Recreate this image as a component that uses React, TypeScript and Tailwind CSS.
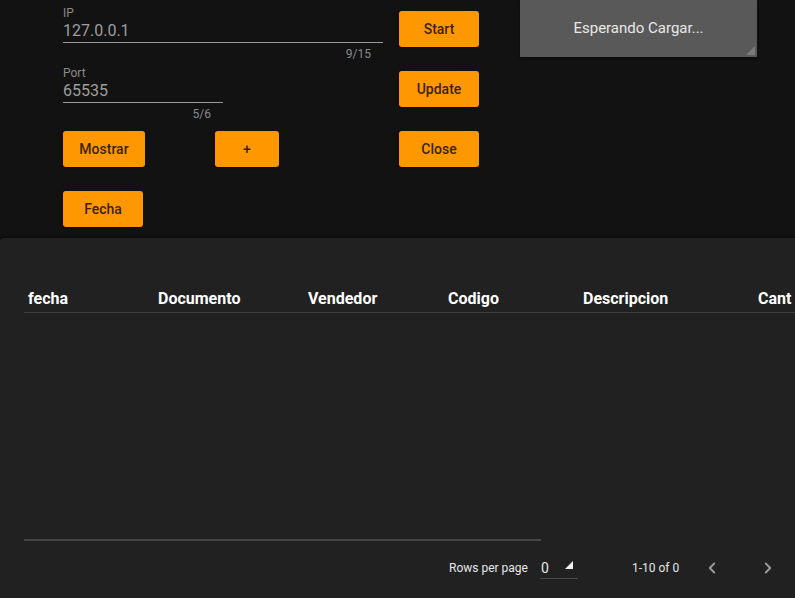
import { ChevronLeft, ChevronRight } from 'lucide-react';

const columns = [
  { label: 'fecha', width: 'w-[130px]' },
  { label: 'Documento', width: 'w-[150px]' },
  { label: 'Vendedor', width: 'w-[140px]' },
  { label: 'Codigo', width: 'w-[135px]' },
  { label: 'Descripcion', width: 'w-[175px]' },
  { label: 'Cant', width: 'w-[80px]' },
];

const OrangeButton = ({ children, className = '' }: { children: React.ReactNode; className?: string }) => (
  <button
    type="button"
    className={`flex h-9 items-center justify-center rounded-[3px] bg-[#ff9800] text-sm font-medium text-black/80 shadow-[0_1px_2px_rgba(0,0,0,0.4)] ${className}`}
  >
    {children}
  </button>
);

const Field = ({
  label,
  value,
  counter,
  width,
  className = '',
}: {
  label: string;
  value: string;
  counter: string;
  width: string;
  className?: string;
}) => (
  <div className={`flex flex-col ${width} ${className}`}>
    <span className="text-xs leading-[14px] text-[#8a8a8a]">{label}</span>
    <div className="border-b border-[#9a9a9a] pb-[1px] pt-[1px] text-base leading-[20px] text-[#9e9e9e]">{value}</div>
    <span className="mt-[4px] pr-3 text-right text-xs leading-[14px] text-[#8a8a8a]">{counter}</span>
  </div>
);

export default function App() {
  return (
    <div className="flex h-[598px] w-[795px] flex-col overflow-hidden bg-[#121212] font-['Roboto',sans-serif]">
      {/* top controls */}
      <div className="flex h-[238px] shrink-0">
        <div className="ml-[63px] flex w-[320px] flex-col pt-[6px]">
          <Field label="IP" value="127.0.0.1" counter="9/15" width="w-[320px]" />
          <Field label="Port" value="65535" counter="5/6" width="w-[160px]" className="mt-[5px]" />
          <div className="mt-[10px] flex gap-[70px]">
            <OrangeButton className="w-[82px]">Mostrar</OrangeButton>
            <OrangeButton className="w-16">+</OrangeButton>
          </div>
          <OrangeButton className="mt-6 w-20">Fecha</OrangeButton>
        </div>
        <div className="ml-4 flex flex-col gap-6 pt-[11px]">
          <OrangeButton className="w-20">Start</OrangeButton>
          <OrangeButton className="w-20">Update</OrangeButton>
          <OrangeButton className="w-20">Close</OrangeButton>
        </div>
        <div className="relative ml-[41px] flex h-[57px] w-[237px] items-center justify-center bg-[#595959] shadow-[0_1px_2px_rgba(0,0,0,0.6)]">
          <span className="text-[15px] text-[#e8e8e8]">Esperando Cargar...</span>
          <svg className="absolute bottom-[2px] right-[2px]" width="9" height="9" viewBox="0 0 9 9">
            <path d="M9 0 L9 9 L0 9 Z" fill="#7a7a7a" />
          </svg>
        </div>
      </div>

      {/* table panel */}
      <div className="flex flex-1 flex-col rounded-tl-[4px] bg-[#212121] pl-6 shadow-[0_-1px_3px_rgba(0,0,0,0.5)]">
        <div className="mt-[47px] flex h-[28px] items-center whitespace-nowrap border-b border-[#3d3d3d]">
          {columns.map((c) => (
            <div key={c.label} className={`${c.width} shrink-0 pl-1 text-base font-bold text-white`}>
              {c.label}
            </div>
          ))}
        </div>
        <div className="mt-[226px] h-[2px] w-[517px] bg-[#464646]" />
        <div className="mt-[16px] flex h-[22px] items-center whitespace-nowrap text-[#e6e6e6]">
          <span className="ml-[425px] text-xs">Rows per page</span>
          <div className="relative ml-[12px] flex h-[22px] w-[38px] items-center border-b border-[#4a4a4a]">
            <span className="ml-[1px] text-sm">0</span>
            <svg className="absolute left-[25px] top-[4px]" width="8" height="8" viewBox="0 0 8 8">
              <path d="M8 0 L8 8 L0 8 Z" fill="#f0f0f0" />
            </svg>
          </div>
          <span className="ml-[54px] text-xs">1-10 of 0</span>
          <ChevronLeft className="ml-[24px] h-[18px] w-[18px] text-[#9a9a9a]" strokeWidth={2.5} />
          <ChevronRight className="ml-[38px] h-[18px] w-[18px] text-[#9a9a9a]" strokeWidth={2.5} />
        </div>
      </div>
    </div>
  );
}
